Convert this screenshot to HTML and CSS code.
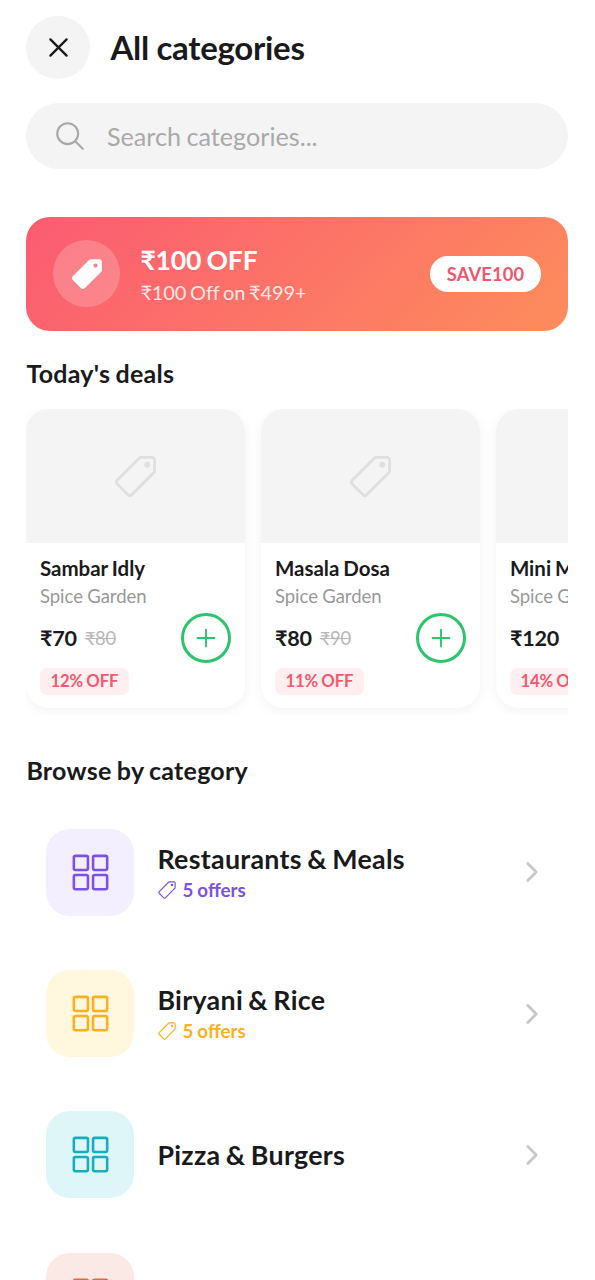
FILE: index.html
```html
<!DOCTYPE html>
<html lang="en">
<head>
<meta charset="utf-8">
<title>All categories</title>
<link rel="stylesheet" href="styles.css">
</head>
<body>
<svg class="defs" aria-hidden="true">
  <symbol id="tag" viewBox="0 0 512 512">
    <path d="M435.25 48h-122.9a14.46 14.46 0 00-10.2 4.2L56.45 297.9a28.85 28.85 0 000 40.7l117 117a28.85 28.85 0 0040.7 0L459.75 210a14.46 14.46 0 004.2-10.2V76.8a28.66 28.66 0 00-28.7-28.8z" fill="none" stroke="currentColor" stroke-width="30" stroke-linejoin="round"/>
    <circle cx="384" cy="128" r="32" fill="currentColor"/>
  </symbol>
  <symbol id="tag-solid" viewBox="0 0 512 512">
    <path fill-rule="evenodd" d="M467 45.2A44.45 44.45 0 00435.29 32H312.36a30.63 30.63 0 00-21.52 8.89L45.09 286.59a44.82 44.82 0 000 63.32l117 117a44.83 44.83 0 0063.34 0l245.65-245.6A30.6 30.6 0 00480 199.8v-123a44.24 44.24 0 00-13-31.6zM384 160a32 32 0 1132-32 32 32 0 01-32 32z" fill="currentColor"/>
  </symbol>
  <symbol id="grid" viewBox="0 0 512 512">
    <g fill="none" stroke="currentColor" stroke-width="32">
      <rect x="48" y="48" width="176" height="176" rx="20"/><rect x="288" y="48" width="176" height="176" rx="20"/>
      <rect x="48" y="288" width="176" height="176" rx="20"/><rect x="288" y="288" width="176" height="176" rx="20"/>
    </g>
  </symbol>
  <symbol id="plus" viewBox="0 0 512 512"><path d="M256 112v288M400 256H112" fill="none" stroke="currentColor" stroke-width="32" stroke-linecap="round"/></symbol>
  <symbol id="chevron" viewBox="0 0 512 512"><path d="M184 112l144 144-144 144" fill="none" stroke="currentColor" stroke-width="48" stroke-linecap="round" stroke-linejoin="round"/></symbol>
</svg>

<header class="header">
  <button class="close" aria-label="Close"><svg viewBox="0 0 512 512"><path d="M368 368L144 144M368 144L144 368" fill="none" stroke="currentColor" stroke-width="32" stroke-linecap="round"/></svg></button>
  <h1 class="title">All categories</h1>
</header>

<div class="search">
  <svg viewBox="0 0 512 512"><path d="M221.09 64a157.09 157.09 0 10157.09 157.09A157.1 157.1 0 00221.09 64zM338.29 338.29L448 448" fill="none" stroke="currentColor" stroke-width="32" stroke-linecap="round"/></svg>
  <span>Search categories...</span>
</div>

<section class="banner">
  <div class="banner-icon"><svg><use href="#tag-solid"/></svg></div>
  <div class="banner-text">
    <div class="banner-title">₹100 OFF</div>
    <div class="banner-sub">₹100 Off on ₹499+</div>
  </div>
  <div class="code">SAVE100</div>
</section>

<h2 class="heading">Today's deals</h2>
<div class="deals">
  <article class="card">
    <div class="photo"><svg><use href="#tag"/></svg></div>
    <div class="info">
      <div class="name">Sambar Idly</div>
      <div class="shop">Spice Garden</div>
      <div class="buy"><span class="price">₹70</span><s class="old">₹80</s><button class="add" aria-label="Add"><svg><use href="#plus"/></svg></button></div>
      <span class="off">12% OFF</span>
    </div>
  </article>
  <article class="card">
    <div class="photo"><svg><use href="#tag"/></svg></div>
    <div class="info">
      <div class="name">Masala Dosa</div>
      <div class="shop">Spice Garden</div>
      <div class="buy"><span class="price">₹80</span><s class="old">₹90</s><button class="add" aria-label="Add"><svg><use href="#plus"/></svg></button></div>
      <span class="off">11% OFF</span>
    </div>
  </article>
  <article class="card">
    <div class="photo"><svg><use href="#tag"/></svg></div>
    <div class="info">
      <div class="name">Mini Meals</div>
      <div class="shop">Spice Garden</div>
      <div class="buy"><span class="price">₹120</span></div>
      <span class="off">14% OFF</span>
    </div>
  </article>
</div>

<h2 class="heading browse">Browse by category</h2>
<div class="list">
  <div class="row violet">
    <div class="tile"><svg><use href="#grid"/></svg></div>
    <div class="label"><div class="cat">Restaurants &amp; Meals</div><div class="offers"><svg><use href="#tag"/></svg>5 offers</div></div>
    <svg class="chev"><use href="#chevron"/></svg>
  </div>
  <div class="row amber">
    <div class="tile"><svg><use href="#grid"/></svg></div>
    <div class="label"><div class="cat">Biryani &amp; Rice</div><div class="offers"><svg><use href="#tag"/></svg>5 offers</div></div>
    <svg class="chev"><use href="#chevron"/></svg>
  </div>
  <div class="row teal">
    <div class="tile"><svg><use href="#grid"/></svg></div>
    <div class="label"><div class="cat">Pizza &amp; Burgers</div></div>
    <svg class="chev"><use href="#chevron"/></svg>
  </div>
  <div class="row orange">
    <div class="tile"><svg><use href="#grid"/></svg></div>
  </div>
</div>
</body>
</html>
```
FILE: styles.css
```css
* { box-sizing: border-box; }
html { height: 100%; overflow: hidden; }
body {
  margin: 0;
  height: 1280px;
  overflow: hidden;
  padding: 15.4px 27px 0 26.4px;
  background: #fff;
  color: #1a1a1c;
  font-family: Lato, "Noto Sans", sans-serif;
}
h1, h2 { margin: 0; }
svg { display: block; flex: none; }
button { padding: 0; border: 0; font: inherit; }
.defs { position: absolute; width: 0; height: 0; }

.header { display: flex; align-items: center; gap: 20.5px; height: 64px; }
.close {
  display: flex; align-items: center; justify-content: center;
  width: 63.5px; height: 63.5px; border-radius: 50%;
  background: #f4f4f4; color: #1a1a1c;
}
.close svg { width: 37px; height: 37px; }
.title { font-size: 33px; line-height: 40px; font-weight: 700; letter-spacing: -.3px; }

.search {
  display: flex; align-items: center; gap: 20px;
  height: 66.3px; margin-top: 23.5px; padding-left: 26.5px;
  border-radius: 34px; background: #f4f4f4; color: #a9a9a9;
  font-size: 25.2px; word-spacing: -1px;
}
.search svg { width: 34px; height: 34px; }

.banner {
  display: flex; align-items: center;
  height: 114px; margin-top: 47.8px; padding: 0 27px;
  border-radius: 24px;
  background: linear-gradient(135deg, #fb5b72, #fd8d5c);
  color: #fff;
}
.banner-icon {
  display: flex; align-items: center; justify-content: center;
  width: 67px; height: 67px; border-radius: 50%;
  background: rgba(255, 255, 255, .2);
}
.banner-icon svg { width: 34px; height: 34px; }
.banner-text { flex: 1; padding-left: 20px; }
.banner-title { font-size: 26.6px; line-height: 32px; font-weight: 700; letter-spacing: -.2px; word-spacing: -1px; }
.banner-sub { font-size: 20px; line-height: 24px; margin-top: 3.5px; letter-spacing: -.1px; word-spacing: -1.3px; color: rgba(255, 255, 255, .85); }
.code {
  height: 36px; padding: 0 16.8px; border-radius: 18px;
  background: #fff; color: #f05570;
  font-size: 18.3px; line-height: 36px; font-weight: 700; letter-spacing: .15px;
}

.heading { font-size: 25px; line-height: 30px; font-weight: 700; margin-top: 27px; letter-spacing: .25px; word-spacing: -1px; }
.deals { display: flex; gap: 16px; margin-top: 21px; padding-bottom: 6.5px; overflow: hidden; }
.card {
  flex: none; width: 219px; height: 299.5px;
  border-radius: 23px; background: #fff;
  box-shadow: 0 3px 13px rgba(0, 0, 0, .05);
}
.photo {
  display: flex; align-items: center; justify-content: center;
  height: 134.5px; border-radius: 23px 23px 0 0;
  background: #f4f4f4; color: #dfdfdf;
}
.photo svg { width: 47px; height: 47px; }
.info { padding: 13px 13.5px; }
.name { font-size: 20.5px; line-height: 25px; font-weight: 700; word-spacing: -1px; }
.shop { font-size: 18.5px; line-height: 22px; margin-top: 4px; word-spacing: -.5px; color: #999; }
.buy { display: flex; align-items: center; height: 50px; margin-top: 5.5px; }
.price { font-size: 21.6px; font-weight: 700; letter-spacing: -.25px; }
.old { margin-left: 8px; font-size: 18.3px; letter-spacing: -.2px; color: #b8b8b8; }
.add {
  display: flex; align-items: center; justify-content: center;
  width: 50.5px; height: 50.5px; margin-left: auto; margin-right: .5px;
  border: 3.2px solid #2ac56c; border-radius: 50%;
  background: #fff; color: #2ac56c;
}
.add svg { width: 30px; height: 30px; }
.off {
  display: inline-block; height: 27px; margin-top: 5.3px; padding: 0 10.5px;
  border-radius: 7px; background: #ffeff0; color: #f05a70;
  font-size: 16.7px; line-height: 27px; font-weight: 700; letter-spacing: -.1px; word-spacing: -.8px;
}

.browse { margin-top: 39.6px; }
.row { display: flex; align-items: center; height: 141.2px; padding: 0 21px 0 20px; }
.list { margin-top: 17.3px; }
.tile {
  display: flex; align-items: center; justify-content: center;
  width: 87.5px; height: 87px; border-radius: 24px;
}
.tile svg { width: 41px; height: 41px; }
.label { flex: 1; padding-left: 23.5px; }
.cat { font-size: 26.8px; line-height: 32px; font-weight: 700; letter-spacing: .3px; word-spacing: -1.5px; }
.offers { display: flex; align-items: center; gap: 5px; margin-top: 3.5px; font-size: 18.8px; line-height: 24px; font-weight: 700; word-spacing: -.5px; }
.offers svg { width: 20px; height: 20px; }
.chev { width: 30px; height: 30px; color: #c8c8c8; }
.violet .tile { background: #f3efff; }
.violet .tile, .violet .offers { color: #7b51ea; }
.amber .tile { background: #fff7de; }
.amber .tile, .amber .offers { color: #fbb01c; }
.teal .tile { background: #dff6f9; color: #16adbd; }
.orange .tile { background: #fbe9e6; color: #ee6434; }
```
